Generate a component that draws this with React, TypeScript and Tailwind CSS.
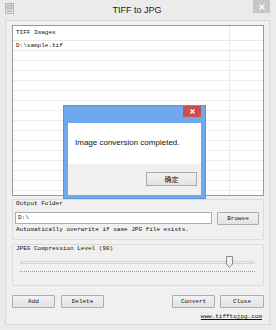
import React from "react";

const mono = "font-['Liberation_Mono','DejaVu_Sans_Mono',monospace] text-[6px] leading-[8px] text-[#111]";
const btn =
	"h-[13px] flex items-center justify-center rounded-[1px] border border-[#acacac] bg-gradient-to-b from-[#f2f2f2] to-[#e3e3e3] " + mono;

function WinButton({ label, width, focused = false }: { label: string; width: string; focused?: boolean }) {
	return <div className={`${btn} ${width} ${focused ? "border-[#4a9ee6]" : ""}`}>{label}</div>;
}

export default function App() {
	const rows = Array.from({ length: 15 });

	return (
		<div className="relative w-[276px] h-[330px] bg-[#ebebeb] flex flex-col overflow-hidden">
			{/* title bar */}
			<div className="h-[20px] flex items-start shrink-0">
				<svg className="ml-[5px] mt-[3px]" width="9" height="11" viewBox="0 0 9 11">
					<rect x="0.5" y="0.5" width="8" height="10" fill="#e4e4e4" stroke="#b4b4b4" />
					<rect x="2" y="2" width="5" height="4" fill="#c8c8c8" stroke="#a8a8a8" strokeWidth="0.6" />
					<rect x="2" y="7.5" width="5" height="1.5" fill="#b8b8b8" />
				</svg>
				<div className="flex-1 pl-[7px] pt-[5px] text-center font-['Liberation_Sans',Arial,sans-serif] text-[9px] leading-[10px] text-[#222]">
					TIFF to JPG
				</div>
				<div className="w-[17px] h-[13px] mr-[6px] bg-[#c7c7c7] flex items-center justify-center">
					<svg width="6" height="6" viewBox="0 0 6 6">
						<path d="M0.5 0.5 L5.5 5.5 M5.5 0.5 L0.5 5.5" stroke="#fff" strokeWidth="1.3" />
					</svg>
				</div>
			</div>

			{/* client area */}
			<div className="flex-1 ml-[5px] mr-[6px] mb-[5px] bg-[#f0f0f0] border border-[#d9d9d9] flex flex-col pl-[6px] pr-[5px] pt-[4px]">
				{/* list view */}
				<div className="h-[171px] shrink-0 border border-[#9a9a9a] bg-white flex flex-col overflow-hidden">
					<div className="h-[15px] shrink-0 flex border-b border-[#e8e8e8]">
						<div className={`w-[217px] border-r border-[#e8e8e8] pl-[3px] flex items-center ${mono}`}>TIFF Images</div>
						<div className="flex-1" />
					</div>
					<div className="h-[10px] shrink-0 flex border-b border-[#e8e8e8]">
						<div className={`w-[217px] border-r border-[#e8e8e8] pl-[3px] flex items-center ${mono}`}>D:\sample.tif</div>
						<div className="flex-1" />
					</div>
					{rows.map((_, i) => (
						<div key={i} className="h-[10px] shrink-0 flex border-b border-[#ececec]">
							<div className="w-[217px] border-r border-[#e8e8e8]" />
							<div className="flex-1" />
						</div>
					))}
				</div>

				{/* output folder group */}
				<div className="mt-[3px] h-[41px] shrink-0 border border-[#dcdcdc] rounded-[2px] px-[2px] pt-[0px] flex flex-col">
					<div className={`${mono} pl-[1px]`}>Output Folder</div>
					<div className="mt-[4px] flex items-start gap-[5px]">
						<div className={`w-[197px] h-[12px] border border-[#abadb3] bg-white flex items-center pl-[2px] ${mono}`}>D:\</div>
						<WinButton label="Browse" width="w-[42px]" />
					</div>
					<div className={`mt-[1px] pl-[1px] ${mono}`}>Automatically overwrite if same JPG file exists.</div>
				</div>

				{/* compression group */}
				<div className="mt-[4px] h-[42px] shrink-0 border border-[#dcdcdc] rounded-[2px] px-[2px] flex flex-col">
					<div className={`${mono} pl-[1px]`}>JPEG Compression Level (90)</div>
					<div className="mt-[3px] ml-[5px] w-[235px] h-[12px] relative">
						<div className="absolute left-0 right-0 top-[5px] h-[3px] border border-[#d6d6d6] bg-[#e7e7e7]" />
						<svg className="absolute left-[206px] top-[0px]" width="7" height="12" viewBox="0 0 7 12">
							<path d="M0.5 0.5 H6.5 V8 L3.5 11.5 L0.5 8 Z" fill="#f0f0f0" stroke="#8a8a8a" />
						</svg>
					</div>
					<div className="mt-[3px] ml-[5px] w-[235px] border-t border-dotted border-[#9c9c9c]" />
				</div>

				{/* buttons */}
				<div className="mt-[9px] flex items-center">
					<WinButton label="Add" width="w-[43px]" />
					<div className="ml-[6px]">
						<WinButton label="Delete" width="w-[43px]" />
					</div>
					<div className="flex-1" />
					<WinButton label="Convert" width="w-[43px]" />
					<div className="ml-[5px]">
						<WinButton label="Close" width="w-[44px]" focused />
					</div>
				</div>

				<div className="mt-[5px] flex justify-end pr-[2px]">
					<span className={`${mono} text-[#2a2aa0] underline`}>www.tifftojpg.com</span>
				</div>
			</div>

			{/* message box */}
			<div className="absolute left-[63px] top-[105px] w-[143px] h-[94px] bg-[#6fa8ec] border border-[#5c96dc] flex flex-col px-[4px] pb-[3px]">
				<div className="h-[17px] shrink-0 flex justify-end items-start">
					<div className="w-[18px] h-[11px] bg-[#c75050] flex items-center justify-center">
						<svg width="5" height="5" viewBox="0 0 5 5">
							<path d="M0.5 0.5 L4.5 4.5 M4.5 0.5 L0.5 4.5" stroke="#fff" strokeWidth="1.2" />
						</svg>
					</div>
				</div>
				<div className="flex-1 flex flex-col bg-white">
					<div className="h-[41px] shrink-0 pl-[7px] pt-[15px] font-['Liberation_Sans',Arial,sans-serif] text-[8px] leading-[10px] text-[#111]">
						Image conversion completed.
					</div>
					<div className="flex-1 bg-[#f0f0f0] flex justify-end items-start pt-[8px] pr-[4px]">
						<div className="w-[51px] h-[14px] border border-[#acacac] bg-gradient-to-b from-[#f2f2f2] to-[#e3e3e3] flex items-center justify-center font-['Noto_Sans_CJK_SC',sans-serif] text-[7px] leading-[8px] text-[#111]">
							确定
						</div>
					</div>
				</div>
			</div>
		</div>
	);
}
